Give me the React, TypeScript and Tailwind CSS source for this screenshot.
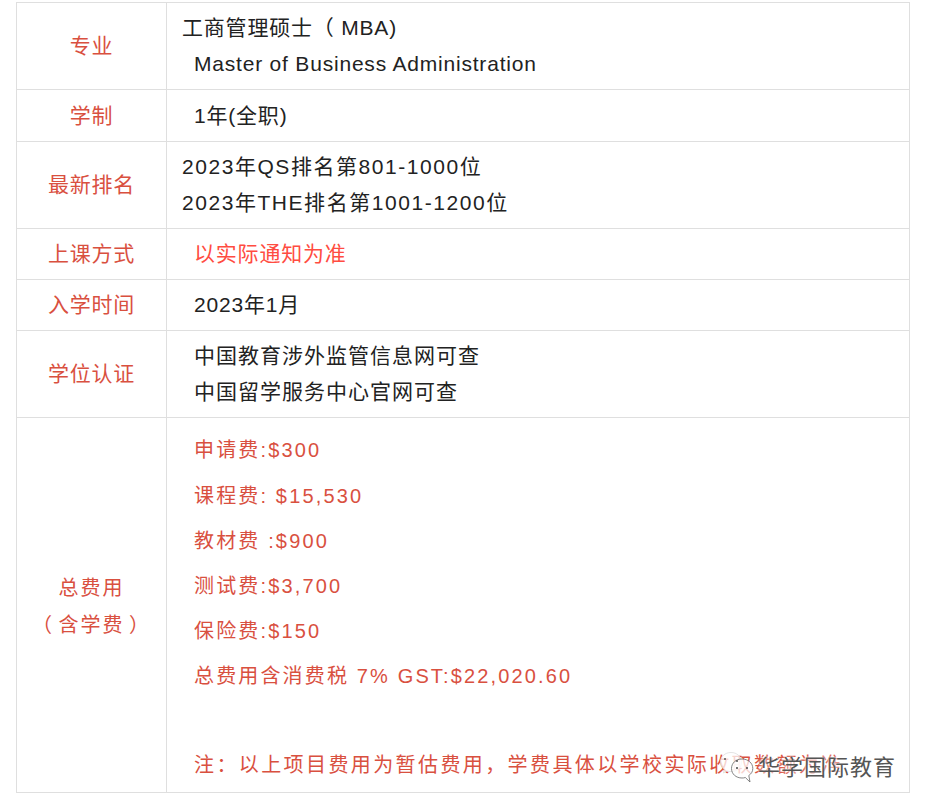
const font = "[font-family:'Liberation_Sans','Noto_Sans_CJK_SC',sans-serif]";

function Label({ children }: { children: React.ReactNode }) {
  return (
    <td className="border border-[#dfdfdf] text-center align-middle text-[#d9503f] p-0">
      {children}
    </td>
  );
}

function Value({ children }: { children: React.ReactNode }) {
  return <td className="border border-[#dfdfdf] align-middle pl-[15px] p-0">{children}</td>;
}

const fees = ["申请费:$300", "课程费: $15,530", "教材费 :$900", "测试费:$3,700", "保险费:$150", "总费用含消费税 7% GST:$22,020.60"];

export default function App() {
  return (
    <div className={`relative w-[925px] h-[809px] bg-white overflow-hidden pt-[2px] pl-[16px] ${font} text-[21px] leading-[36px] tracking-[0.8px] text-[#222]`}>
      <table className="border-collapse table-fixed w-[894px]">
        <colgroup>
          <col className="w-[150px]" />
          <col />
        </colgroup>
        <tbody>
          <tr className="h-[87px]">
            <Label>专业</Label>
            <Value>
              <div>工商管理硕士（ MBA)</div>
              <div className="pl-[12px]">Master of Business Administration</div>
            </Value>
          </tr>
          <tr className="h-[52px]">
            <Label>学制</Label>
            <Value><div className="pl-[12px]">1年(全职)</div></Value>
          </tr>
          <tr className="h-[87px]">
            <Label>最新排名</Label>
            <Value>
              <div className="tracking-[1.55px]">2023年QS排名第801-1000位</div>
              <div className="tracking-[1.55px]">2023年THE排名第1001-1200位</div>
            </Value>
          </tr>
          <tr className="h-[51px]">
            <Label>上课方式</Label>
            <Value><div className="pl-[12px] text-[#ff4c41]">以实际通知为准</div></Value>
          </tr>
          <tr className="h-[51px]">
            <Label>入学时间</Label>
            <Value><div className="pl-[12px]">2023年1月</div></Value>
          </tr>
          <tr className="h-[87px]">
            <Label>学位认证</Label>
            <Value>
              <div className="pl-[12px] tracking-[1px]">中国教育涉外监管信息网可查</div>
              <div className="pl-[12px] tracking-[1px]">中国留学服务中心官网可查</div>
            </Value>
          </tr>
          <tr className="h-[375px]">
            <Label>
              <div className="pt-[4px] text-[20px] tracking-[2px] leading-[37px]">总费用</div>
              <div className="text-[20px] tracking-[2px] leading-[37px] [word-spacing:-3px]">（ 含学费 ）</div>
            </Label>
            <Value>
              <div className="pl-[12px] text-[#d9503f] text-[20px] tracking-[2.15px] leading-[35px] flex flex-col pt-[6px]">
                {fees.map((f, i) => (
                  <div key={f} className={i === 0 ? "mb-[11px]" : "mb-[10px]"}>{f}</div>
                ))}
                <div className="mt-[44px] whitespace-nowrap tracking-[2.4px]">注：以上项目费用为暂估费用，学费具体以学校实际收取数额为准</div>
              </div>
            </Value>
          </tr>
        </tbody>
      </table>
      <div className="absolute left-[720px] top-[752px] flex items-center gap-[4px] text-[22px] leading-[31px] tracking-[1px] text-[#555] [text-shadow:0_0_3px_#fff,0_0_3px_#fff]">
        <svg width="34" height="31" viewBox="0 0 34 31" fill="none">
          <path d="M11 .5C5 .5 .5 4.500 .5 10c0 3 1.500 5.500 3.800 7.200L3.500 21l3.500-2c1.300.4 2.600.6 4 .6 5.800 0 10.500-4 10.500-9.500S16.800 .5 11 .5z" fill="#fff" fillOpacity="0.75" stroke="#ddd" strokeWidth="0.8" />
          <path d="M22 7c-6 0-10.500 4-10.500 9.500S16 26 22 26c1.200 0 2.300-.1 3.300-.5L30 30l-1.200-6.500c2.500-1.700 4-4 4-7C32.800 11 28 7 22 7z" fill="#fff" fillOpacity="0.75" stroke="#666" strokeWidth="0.8" />
          <circle cx="5" cy="7" r="1" fill="#555" />
          <circle cx="17" cy="9" r="1" fill="#555" />
          <circle cx="17" cy="16" r="1" fill="#444" />
          <circle cx="27" cy="16" r="1" fill="#444" />
        </svg>
        <span>华学国际教育</span>
      </div>
    </div>
  );
}
